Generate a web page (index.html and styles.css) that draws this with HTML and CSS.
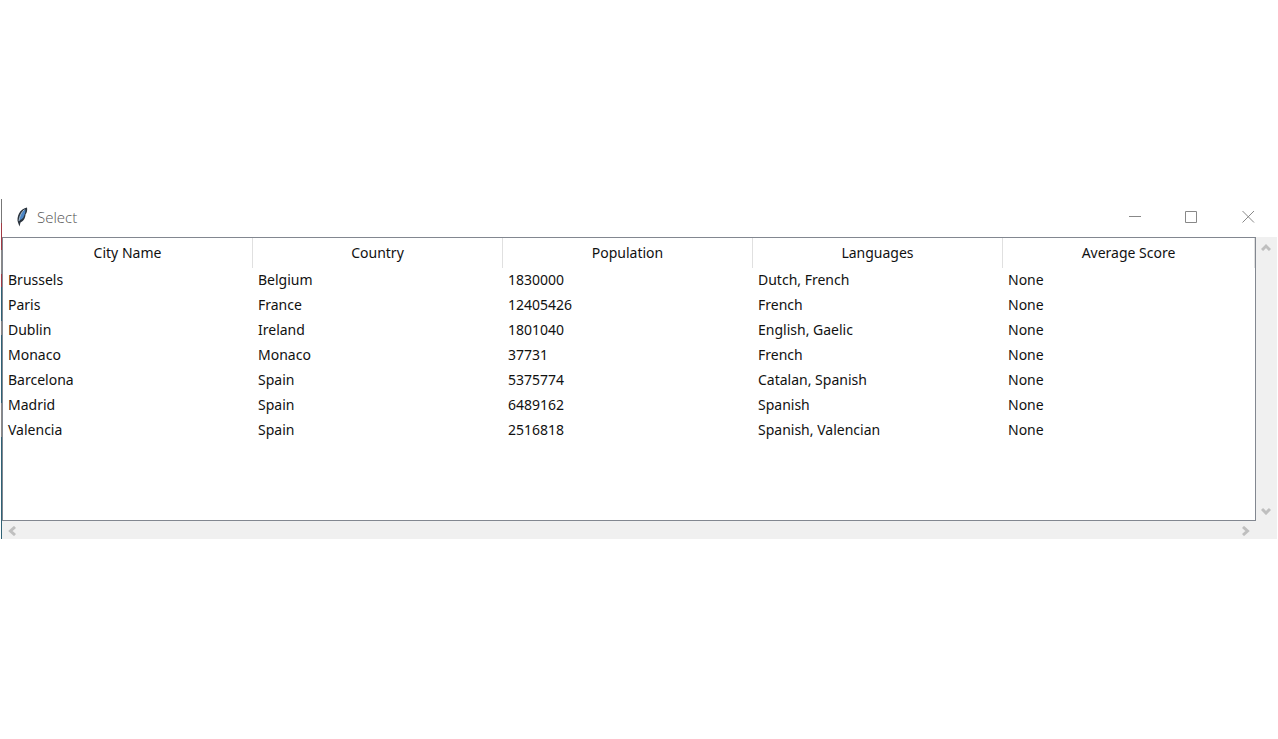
FILE: index.html
```html
<!DOCTYPE html>
<html lang="en">
<head>
<meta charset="utf-8">
<title>Select</title>
<link rel="stylesheet" href="styles.css">
</head>
<body>
<main class="window">
  <header class="titlebar">
    <svg class="feather" width="14" height="22" viewBox="0 0 14 22" aria-hidden="true">
      <path d="M12 1.500C9 2 5.500 4 4 7.500C2.500 10.500 2 14 3 16.500L4.500 20.500L5.500 16.500C9 15 10.500 11 10.500 8.500C12 6.500 12.500 4 12 1.500Z" fill="#2a333d"/>
      <path d="M10.500 3.500C7.500 5 4.500 9 4 14.500L7 13C9 11 10.500 7 10.500 3.500Z" fill="#4a86c8"/>
      <path d="M9.500 3.500C6.500 6 4.500 10 4 15" fill="none" stroke="#a9bccd"/>
    </svg>
    <h1 class="title">Select</h1>
    <div class="controls">
      <button class="control" aria-label="Minimize"><svg width="13" height="13" viewBox="0 0 13 13"><path d="M1 6.500H13"/></svg></button>
      <button class="control" aria-label="Maximize"><svg width="13" height="13" viewBox="0 0 13 13"><path d="M.5 1.500H11.500V12.500H.5Z"/></svg></button>
      <button class="control" aria-label="Close"><svg width="13" height="13" viewBox="0 0 13 13"><path d="M.5 1L12 12.500M12 1L.5 12.500"/></svg></button>
    </div>
  </header>
  <div class="content">
    <div class="list">
      <table class="cities">
        <colgroup><col class="field"><col class="field"><col class="field"><col class="field"><col></colgroup>
        <thead><tr><th>City Name</th><th>Country</th><th>Population</th><th>Languages</th><th>Average Score</th></tr></thead>
        <tbody>
          <tr><td>Brussels</td><td>Belgium</td><td>1830000</td><td>Dutch, French</td><td>None</td></tr>
          <tr><td>Paris</td><td>France</td><td>12405426</td><td>French</td><td>None</td></tr>
          <tr><td>Dublin</td><td>Ireland</td><td>1801040</td><td>English, Gaelic</td><td>None</td></tr>
          <tr><td>Monaco</td><td>Monaco</td><td>37731</td><td>French</td><td>None</td></tr>
          <tr><td>Barcelona</td><td>Spain</td><td>5375774</td><td>Catalan, Spanish</td><td>None</td></tr>
          <tr><td>Madrid</td><td>Spain</td><td>6489162</td><td>Spanish</td><td>None</td></tr>
          <tr><td>Valencia</td><td>Spain</td><td>2516818</td><td>Spanish, Valencian</td><td>None</td></tr>
        </tbody>
      </table>
    </div>
    <div class="scroll vertical">
      <button class="arrow" aria-label="Scroll up"><svg width="10" height="8" viewBox="0 0 10 8"><path d="M1 7L5 3L9 7"/></svg></button>
      <button class="arrow" aria-label="Scroll down"><svg width="10" height="8" viewBox="0 0 10 8"><path d="M1 2L5 6L9 2"/></svg></button>
    </div>
    <div class="scroll horizontal">
      <button class="arrow" aria-label="Scroll left"><svg width="8" height="10" viewBox="0 0 8 10"><path d="M7 1L2.500 5L7 9"/></svg></button>
      <button class="arrow" aria-label="Scroll right"><svg width="8" height="10" viewBox="0 0 8 10"><path d="M1 1L5.500 5L1 9"/></svg></button>
    </div>
  </div>
</main>
</body>
</html>
```
FILE: styles.css
```css
* { box-sizing: border-box; }
body {
  margin: 0;
  min-height: 100vh;
  padding-bottom: 2px;
  display: flex;
  align-items: center;
  background: #fff;
  color: #111;
  font: 14px/24px "Noto Sans", "Open Sans", sans-serif;
}
.window {
  flex: 1;
  margin: 0 1px;
  padding-left: 1px;
  background: linear-gradient(#777 7%, #a03a44 7% 15%, #888 15% 22%, #a03a44 22% 26%, #2f6275 26% 36%, #888 36% 40%, #2f6275 40% 60%, #888 60% 70%, #2f6275 70%) left / 1px 100% no-repeat;
}
.titlebar {
  display: flex;
  align-items: center;
  height: 38px;
  padding: 0 0 2px 13px;
}
.feather { margin-right: 8px; }
.title {
  margin: 0;
  flex: 1;
  color: #555;
  font: 300 15px/24px "Open Sans", sans-serif;
}
.controls { display: flex; }
.control {
  display: flex;
  align-items: center;
  justify-content: center;
  width: 57px;
  height: 36px;
  padding: 0;
  border: 0;
  background: none;
}
.control path { fill: none; stroke: #888; }
.content {
  display: grid;
  grid-template-columns: 1fr 21px;
  background: #f0f0f0;
}
.list {
  min-height: 284px;
  border: 1px solid #828790;
  background: #fff;
}
.cities {
  width: 100%;
  table-layout: fixed;
  border-collapse: separate;
  border-spacing: 0;
}
.field { width: 250px; }
.cities th {
  height: 30px;
  padding: 0;
  border-right: 1px solid #e0e0e0;
  font-weight: 400;
}
.cities td { height: 25px; padding: 0 5px; }
.scroll { display: flex; justify-content: space-between; }
.vertical { flex-direction: column; }
.horizontal { height: 18px; }
.arrow {
  display: flex;
  align-items: center;
  justify-content: center;
  width: 20px;
  height: 20px;
  padding: 0;
  border: 0;
  background: none;
}
.arrow path { fill: none; stroke: #bfbfbf; stroke-width: 3; }
```
